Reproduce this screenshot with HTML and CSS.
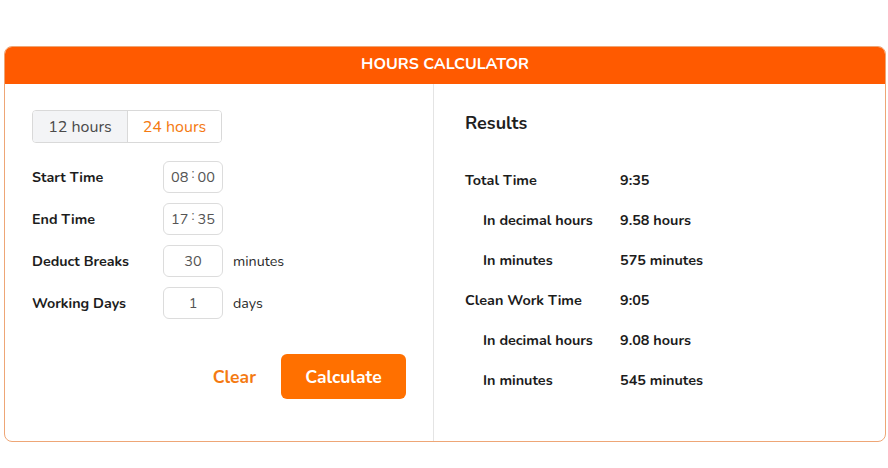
FILE: index.html
```html
<!DOCTYPE html>
<html>
<head>
<meta charset="utf-8">
<link rel="stylesheet" href="styles.css">
</head>
<body>
<div class="card">
  <div class="card-header">HOURS CALCULATOR</div>
  <div class="card-body">
    <div class="panel-left">
      <div class="toggle">
        <div class="toggle-opt off">12 hours</div>
        <div class="toggle-opt on">24 hours</div>
      </div>
      <div class="fields">
        <div class="field">
          <div class="label">Start Time</div>
          <div class="box time"><span>08</span><span class="colon">:</span><span>00</span></div>
        </div>
        <div class="field">
          <div class="label">End Time</div>
          <div class="box time"><span>17</span><span class="colon">:</span><span>35</span></div>
        </div>
        <div class="field">
          <div class="label">Deduct Breaks</div>
          <div class="box num">30</div>
          <div class="unit">minutes</div>
        </div>
        <div class="field">
          <div class="label">Working Days</div>
          <div class="box num">1</div>
          <div class="unit">days</div>
        </div>
      </div>
      <div class="actions">
        <div class="btn-clear">Clear</div>
        <div class="btn-calc">Calculate</div>
      </div>
    </div>
    <div class="panel-right">
      <div class="results-title">Results</div>
      <div class="res-row"><div class="res-label">Total Time</div><div class="res-val">9:35</div></div>
      <div class="res-row sub"><div class="res-label">In decimal hours</div><div class="res-val">9.58 hours</div></div>
      <div class="res-row sub"><div class="res-label">In minutes</div><div class="res-val">575 minutes</div></div>
      <div class="res-row"><div class="res-label">Clean Work Time</div><div class="res-val">9:05</div></div>
      <div class="res-row sub"><div class="res-label">In decimal hours</div><div class="res-val">9.08 hours</div></div>
      <div class="res-row sub"><div class="res-label">In minutes</div><div class="res-val">545 minutes</div></div>
    </div>
  </div>
</div>
</body>
</html>
```
FILE: styles.css
```css
* { box-sizing: border-box; }
html, body { margin: 0; padding: 0; background: #fff; }
body {
  font-family: "Nunito", "Lato", "Noto Sans", sans-serif;
  color: #1f1f1f;
  padding: 46px 2px 0 4px;
}
.card {
  width: 882px;
  border: 1px solid #eea676;
  border-radius: 8px;
  overflow: hidden;
}
.card-header {
  background: #ff5a00;
  color: #fff;
  height: 37px;
  padding-bottom: 3px;
  display: flex;
  align-items: center;
  justify-content: center;
  font-size: 16px;
  font-weight: 700;
}
.card-body {
  display: flex;
  height: 357px;
}
.panel-left {
  width: 429px;
  border-right: 1px solid #e4e4e4;
  padding: 26px 27px 0 27px;
}
.toggle {
  display: flex;
  width: 190px;
  height: 33px;
  border: 1px solid #d9d9d9;
  border-radius: 4px;
  overflow: hidden;
  font-size: 16px;
}
.toggle-opt {
  display: flex;
  align-items: center;
  justify-content: center;
}
.toggle-opt.off {
  width: 95px;
  background: #f3f4f6;
  color: #4a4a4a;
  border-right: 1px solid #d9d9d9;
}
.toggle-opt.on {
  flex: 1;
  background: #fff;
  color: #f47a12;
}
.fields {
  margin-top: 18px;
  display: flex;
  flex-direction: column;
  gap: 10px;
}
.field {
  display: flex;
  align-items: center;
  height: 32px;
}
.label {
  width: 131px;
  font-size: 14.3px;
  font-weight: 700;
  color: #1c1c1c;
}
.box {
  width: 60px;
  height: 32px;
  border: 1px solid #dcdcdc;
  border-radius: 6px;
  display: flex;
  align-items: center;
  justify-content: center;
  font-size: 14.5px;
  color: #555;
}
.box.time { gap: 3px; }
.colon { position: relative; top: -3px; font-size: 13px; }
.unit {
  margin-left: 10px;
  font-size: 14.3px;
  color: #2a2a2a;
}
.actions {
  margin-top: 35px;
  display: flex;
  justify-content: flex-end;
  align-items: center;
  gap: 25px;
}
.btn-clear {
  color: #f47a12;
  font-size: 17.5px;
  font-weight: 700;
}
.btn-calc {
  width: 125px;
  height: 45px;
  background: #ff7000;
  color: #fff;
  border-radius: 6px;
  display: flex;
  align-items: center;
  justify-content: center;
  font-size: 17.5px;
  font-weight: 700;
}
.panel-right {
  flex: 1;
  padding: 27px 0 0 31px;
}
.results-title {
  height: 24px;
  line-height: 24px;
  font-size: 18px;
  font-weight: 700;
  margin-bottom: 25px;
}
.res-row {
  display: flex;
  align-items: center;
  height: 40px;
  font-size: 14.4px;
  font-weight: 700;
  color: #1c1c1c;
}
.res-label { width: 155px; }
.res-row.sub { padding-left: 18px; }
.res-row.sub .res-label { width: 137px; }
```
